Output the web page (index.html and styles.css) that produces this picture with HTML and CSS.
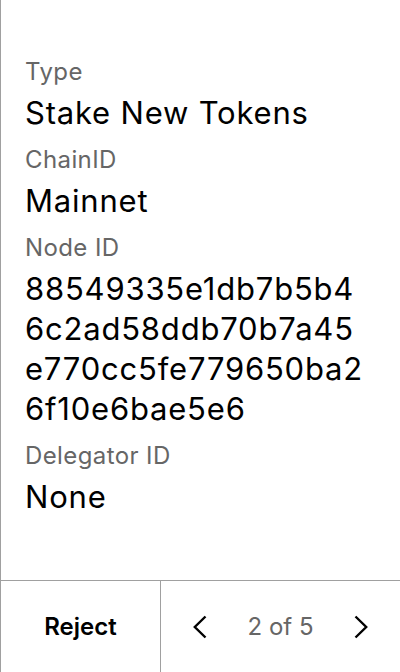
FILE: index.html
```html
<!DOCTYPE html>
<html>
<head>
<meta charset="utf-8">
<link rel="stylesheet" href="styles.css">
</head>
<body>
<div class="screen">
  <div class="content">
    <div class="label">Type</div>
    <div class="value">Stake New Tokens</div>
    <div class="label">ChainID</div>
    <div class="value">Mainnet</div>
    <div class="label">Node ID</div>
    <div class="value">88549335e1db7b5b4<br>6c2ad58ddb70b7a45<br>e770cc5fe779650ba2<br>6f10e6bae5e6</div>
    <div class="label">Delegator ID</div>
    <div class="value">None</div>
  </div>
  <div class="footer">
    <div class="reject">Reject</div>
    <div class="pager">
      <svg class="chev" width="16" height="28" viewBox="0 0 16 28"><path d="M13.5 3.5 L2.8 14 L13.5 24.5" fill="none" stroke="#000" stroke-width="2.4"/></svg>
      <span class="count">2 of 5</span>
      <svg class="chev" width="16" height="28" viewBox="0 0 16 28"><path d="M2.5 3.5 L13.2 14 L2.5 24.5" fill="none" stroke="#000" stroke-width="2.4"/></svg>
    </div>
  </div>
</div>
</body>
</html>
```
FILE: styles.css
```css
html, body { margin: 0; padding: 0; background: #fff; }
body { font-family: Inter, "Noto Sans", sans-serif; }
.screen {
  width: 400px; height: 672px; box-sizing: border-box;
  border-left: 1px solid #a0a0a0;
  display: flex; flex-direction: column;
}
.content { flex: 1; padding: 56px 0 0 24px; }
.label {
  font-size: 24px; line-height: 32px; letter-spacing: 0.4px;
  color: #666; margin-bottom: 5px;
}
.value {
  font-size: 31px; line-height: 40px; letter-spacing: 0.8px;
  color: #000; margin-bottom: 11px;
}
.footer {
  height: 92px; box-sizing: border-box; border-top: 1px solid #a0a0a0;
  display: flex;
}
.reject {
  width: 160px; box-sizing: border-box; border-right: 1px solid #a0a0a0;
  display: flex; align-items: center; justify-content: center;
  font-size: 24px; font-weight: 600; color: #000;
}
.pager {
  flex: 1; display: flex; align-items: center; justify-content: space-between;
  padding: 0 31px 0 31px;
}
.count { font-size: 24px; color: #666; }
.chev { display: block; }
```
